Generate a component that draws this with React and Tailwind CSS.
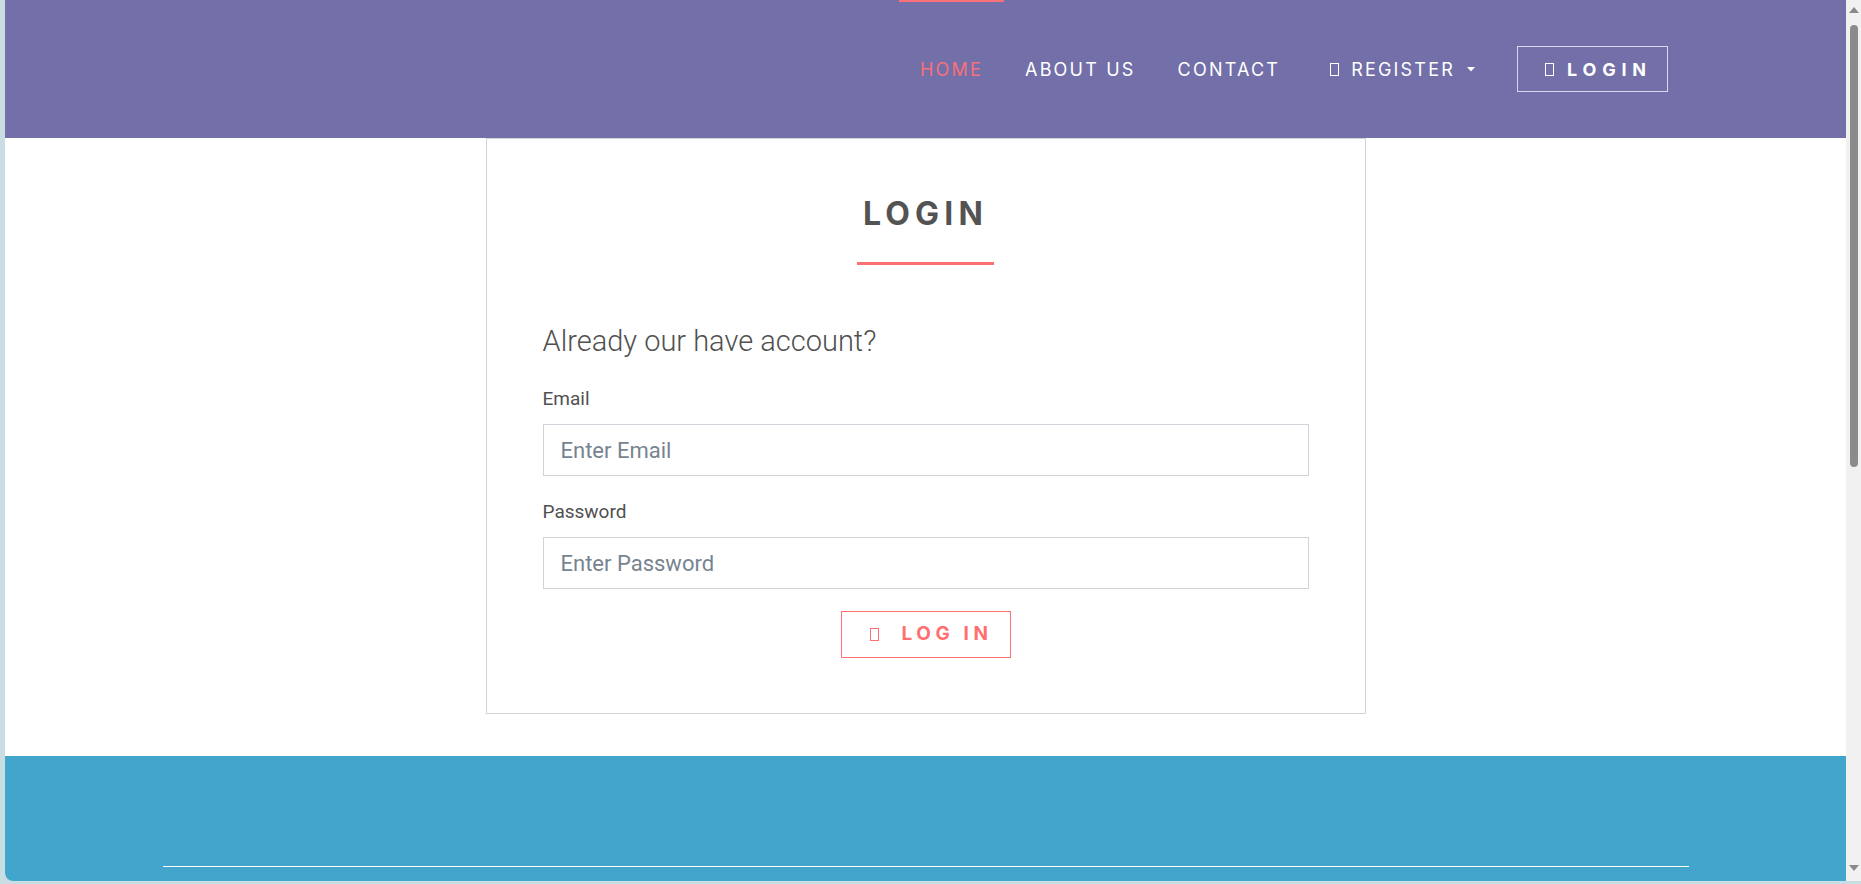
import React from "react";

function Tofu({ className = "" }) {
  return <span className={"inline-block w-[9px] h-[13px] border border-current " + className} />;
}

export default function App() {
  const navBase =
    "flex items-center px-[21px] border-t-2 border-b-2 border-b-transparent font-['Inter',sans-serif] text-[18px] tracking-[2.2px] uppercase";
  return (
    <div className="w-[1861px] h-[884px] overflow-hidden bg-[#c8dee3] flex flex-col">
      <div className="flex h-[881px]">
        <div className="w-[5px] shrink-0" />
        <div className="w-[1841px] shrink-0 flex flex-col bg-white rounded-bl-[8px] overflow-hidden">
          {/* Header */}
          <header className="h-[138px] shrink-0 bg-[#736fa8] flex justify-end pr-[178px]">
            <nav className="flex items-stretch">
              <a className={navBase + " border-t-[#f7707a] text-[#f7707a]"}>Home</a>
              <a className={navBase + " border-t-transparent text-white"}>About Us</a>
              <a className={navBase + " border-t-transparent text-white"}>Contact</a>
              <a className={navBase + " border-t-transparent text-white ml-[8px]"}>
                <Tofu className="mr-[12px]" />
                <span>Register</span>
                <svg width="8" height="5" viewBox="0 0 8 5" className="ml-[12px]">
                  <polygon points="0,0 8,0 4,4.5" fill="white" />
                </svg>
              </a>
              <div className="flex items-center ml-[21px]">
                <a className="w-[151px] h-[46px] border border-[#d9d7ec] flex items-center pl-[27px] text-white font-['Inter',sans-serif] font-bold text-[18px] tracking-[5.8px]">
                  <Tofu className="mr-[13px]" />
                  <span>LOGIN</span>
                </a>
              </div>
            </nav>
          </header>

          {/* Card */}
          <div className="shrink-0 mx-auto w-[880px] border border-[#d3d3d3] pt-[59px] px-[56px] pb-[55px] font-['Roboto',sans-serif]">
            <h2 className="text-center font-['Inter',sans-serif] font-bold text-[32px] leading-none tracking-[5.2px] text-[#535353]">
              LOGIN
            </h2>
            <div className="mx-auto mt-[32px] w-[137px] h-[3px] bg-[#fb7171]" />
            <h3 className="mt-[62px] text-[29px] leading-none font-light text-[#505050]">
              Already our have account?
            </h3>
            <label className="block mt-[33px] text-[19px] leading-none text-[#505050]">Email</label>
            <input
              type="text"
              placeholder="Enter Email"
              className="block mt-[16px] w-full h-[52px] border border-[#cfd4da] pl-[17px] text-[22px] text-[#555] placeholder:text-[#77848f] outline-none font-['Roboto',sans-serif]"
            />
            <label className="block mt-[26px] text-[19px] leading-none text-[#505050]">Password</label>
            <input
              type="password"
              placeholder="Enter Password"
              className="block mt-[16px] w-full h-[52px] border border-[#cfd4da] pl-[17px] text-[22px] text-[#555] placeholder:text-[#77848f] outline-none font-['Roboto',sans-serif]"
            />
            <div className="flex justify-center mt-[22px]">
              <button className="w-[170px] h-[47px] border border-[#ff7272] flex items-center pl-[28px] text-[#ff6f6f] font-['Inter',sans-serif] font-bold text-[19px] tracking-[4.6px]">
                <Tofu className="mr-[23px]" />
                <span>LOG IN</span>
              </button>
            </div>
          </div>

          {/* Footer */}
          <footer className="mt-[42px] flex-1 bg-[#42a5cb] pt-[110px]">
            <div className="mx-auto w-[1526px] h-px bg-white" />
          </footer>
        </div>

        {/* Scrollbar */}
        <div className="w-[15px] shrink-0 bg-[#f1f1f1] flex flex-col items-center">
          <svg width="10" height="7" viewBox="0 0 10 7" className="mt-[7px]">
            <polygon points="5,0 10,6 0,6" fill="#8a8a8a" />
          </svg>
          <div className="mt-[11px] h-[442px] w-[8px] rounded-full bg-[#8b8b8b]" />
          <div className="flex-1" />
          <svg width="10" height="7" viewBox="0 0 10 7" className="mb-[9px]">
            <polygon points="0,0 10,0 5,6" fill="#8a8a8a" />
          </svg>
        </div>
      </div>
    </div>
  );
}
